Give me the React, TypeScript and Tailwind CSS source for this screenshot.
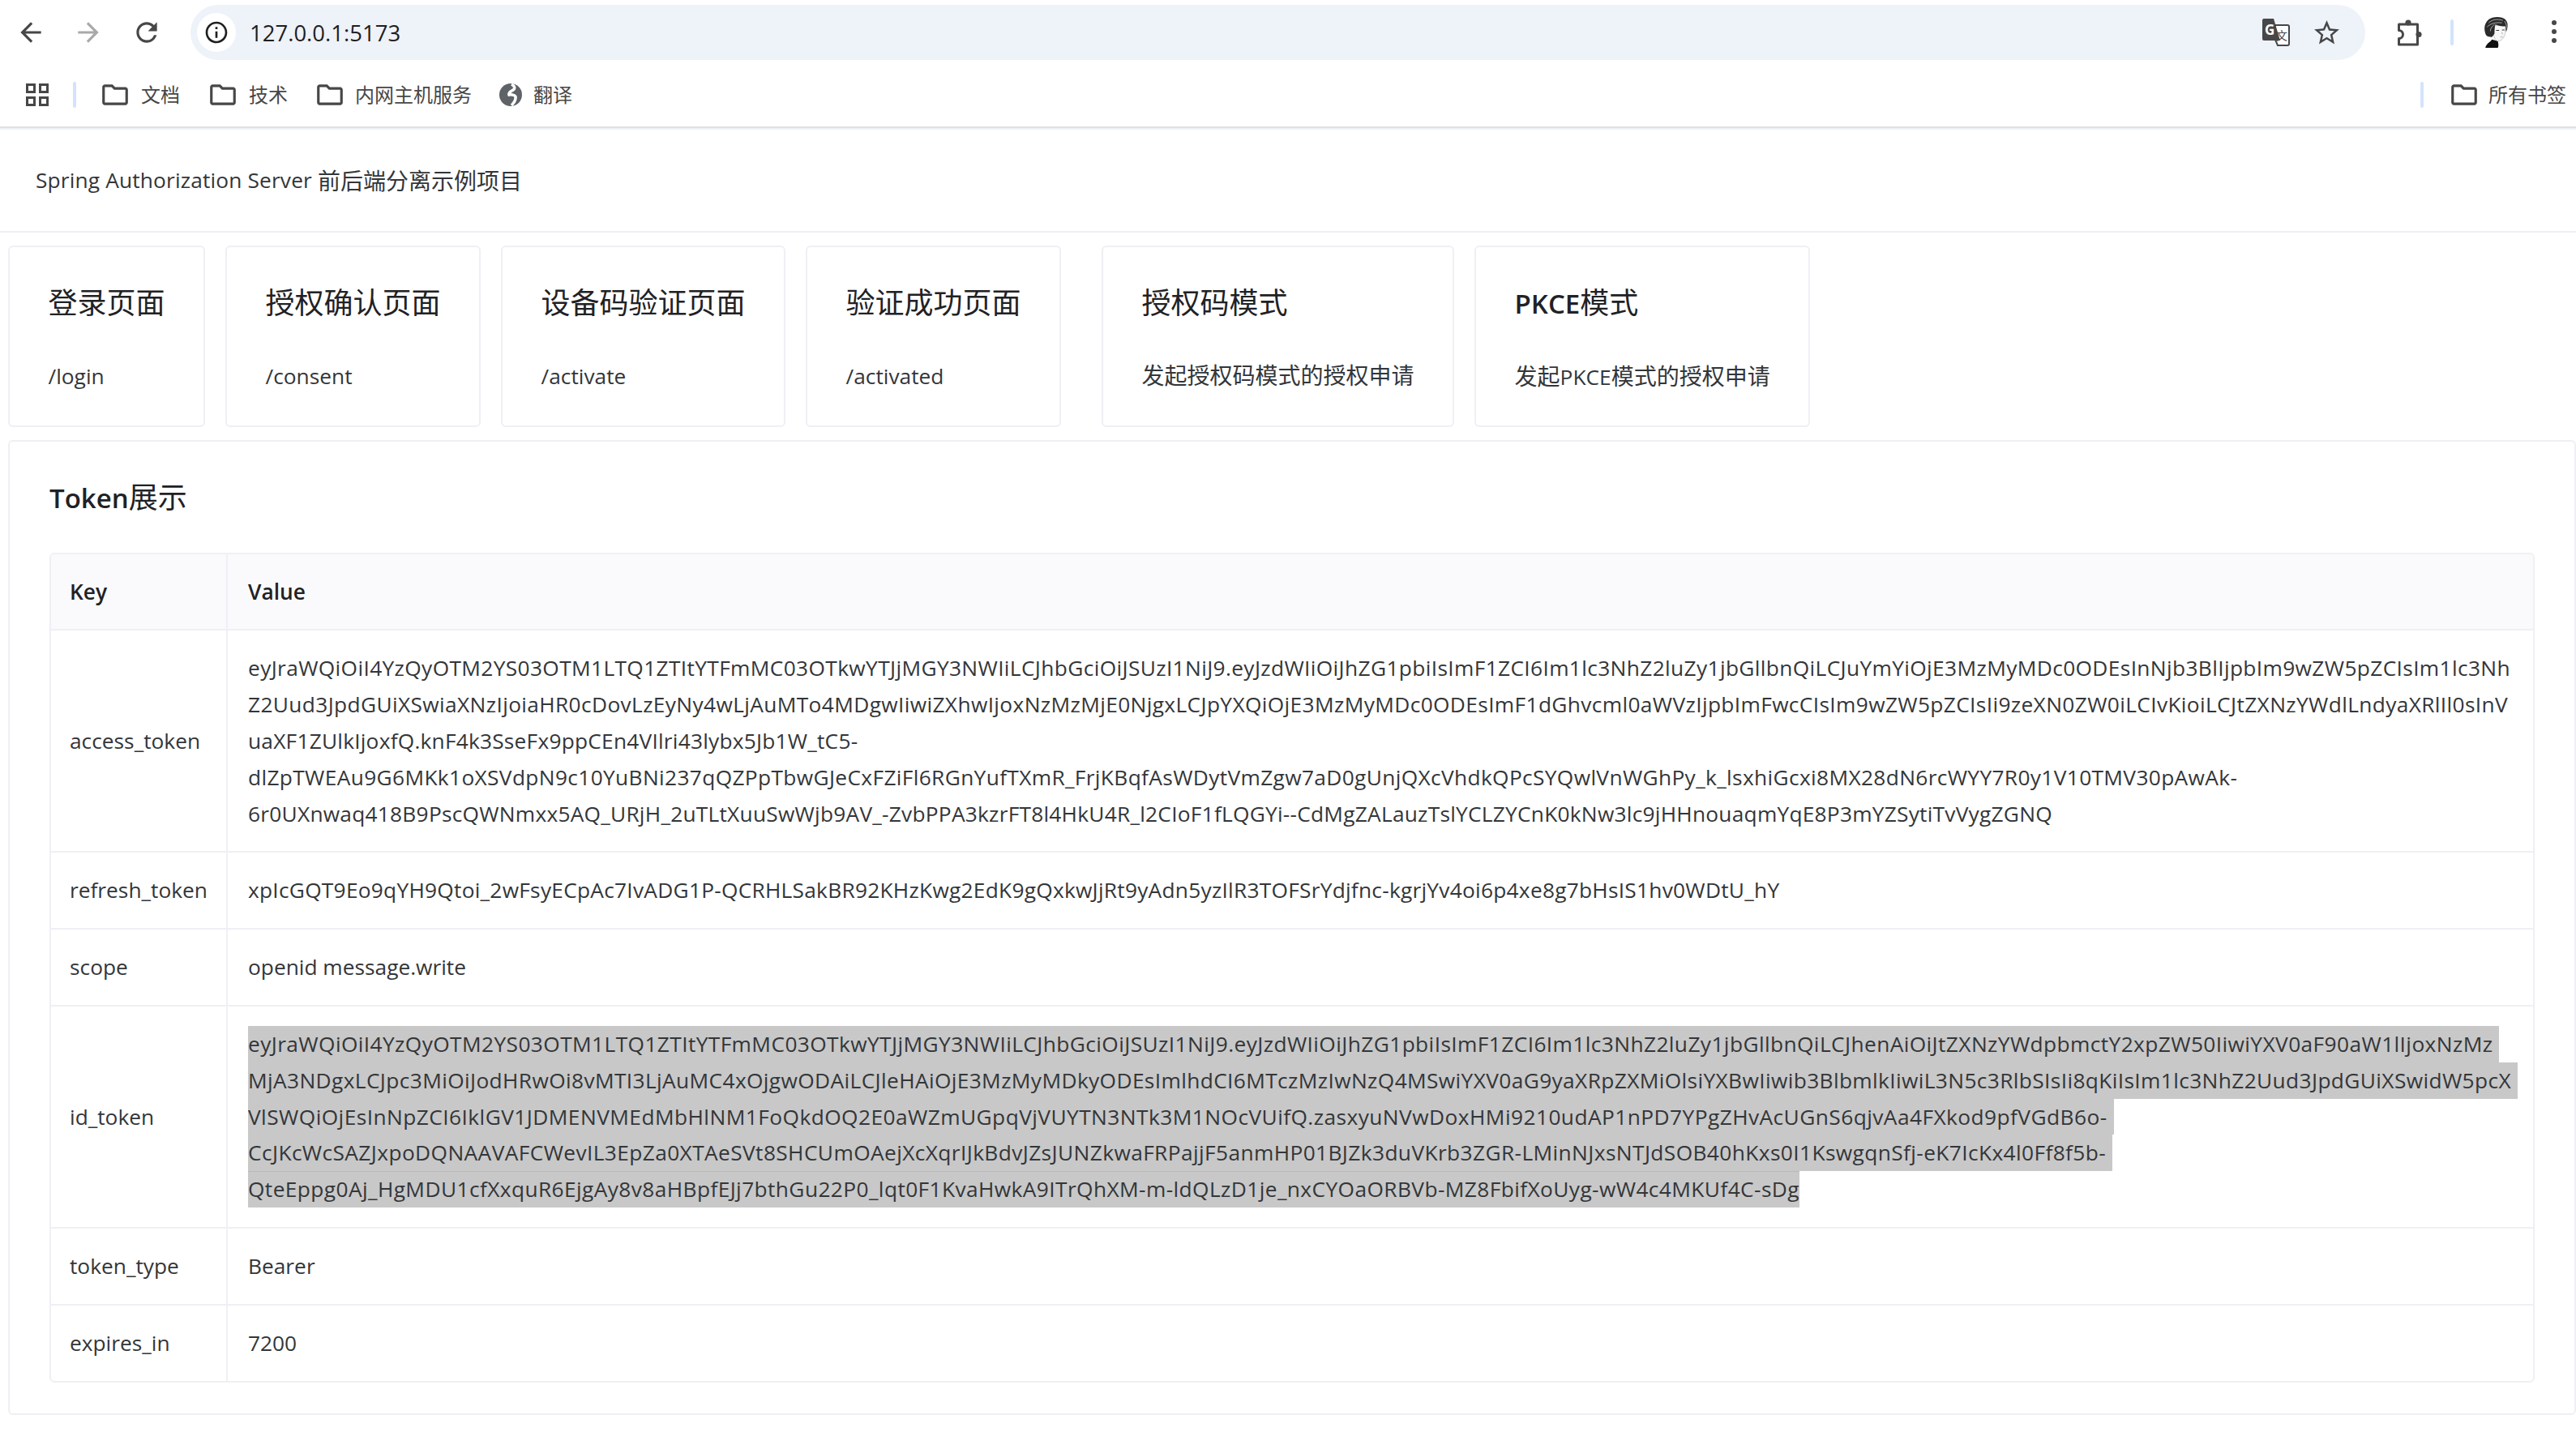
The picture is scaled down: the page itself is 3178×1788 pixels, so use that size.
import React from "react";

const Folder = () => (
  <svg width="38" height="38" viewBox="0 0 24 24" className="shrink-0" fill="#474747">
    <path d="M20 6h-8l-2-2H4c-1.1 0-2 .9-2 2v12c0 1.1.9 2 2 2h16c1.1 0 2-.9 2-2V8c0-1.1-.9-2-2-2zm0 12H4V6h5.17l2 2H20v10z" />
  </svg>
);

const Sep = () => <div className="w-[4px] h-[32px] rounded-full bg-[#d3e3fd] shrink-0" />;

const Avatar = () => (
  <svg width="30" height="38" viewBox="0 0 29 37">
    <path d="M2 37C3 32 8 30 10 27L17 29C18 33 18 35 17 37Z" fill="#111" />
    <path d="M13 10L26 10L26 19C25 25 21 29 17 29C14 28 12 24 12 20Z" fill="#f7f7f7" stroke="#999" strokeWidth="0.5" />
    <path d="M3 22C0 16 0 8 6 3C11 -1 22 -1 26 3C30 7 29 13 27 18L26 11C22 12 17 10 14 9C13 13 13 16 13 20L10 24C7 24 5 24 3 22Z" fill="#2b2b2b" />
    <path d="M6 7C10 3 16 2 23 4M4 12C8 8 14 6 22 7M8 17C8 14 10 11 13 9M25 5C27 8 28 10 27 14" stroke="#d8d8d8" strokeWidth="0.7" fill="none" />
    <path d="M15 16h3.5M22 15.5h3" stroke="#333" strokeWidth="1" />
    <path d="M20 24h3M22 18l.5 3" stroke="#888" strokeWidth="0.6" fill="none" />
  </svg>
);

const accessLines = [
  ["eyJraWQiOiI4YzQyOTM2YS03OTM1LTQ1ZTItYTFmMC03OTkwYTJjMGY3NWIiLCJhbGciOiJSUzI1NiJ9.eyJzdWIiOiJhZG1pbiIsImF1ZCI6Im1lc3NhZ2luZy1jbGllbnQiLCJuYmYiOjE3MzMyMDc0ODEsInNjb3BlIjpbIm9wZW5pZCIsIm1lc3Nh", "tracking-[0.36px]"],
  ["Z2Uud3JpdGUiXSwiaXNzIjoiaHR0cDovLzEyNy4wLjAuMTo4MDgwIiwiZXhwIjoxNzMzMjE0NjgxLCJpYXQiOjE3MzMyMDc0ODEsImF1dGhvcml0aWVzIjpbImFwcCIsIm9wZW5pZCIsIi9zeXN0ZW0iLCIvKioiLCJtZXNzYWdlLndyaXRlIl0sInV", "tracking-[0.36px]"],
  ["uaXF1ZUlkIjoxfQ.knF4k3SseFx9ppCEn4VIlri43lybx5Jb1W_tC5-", "tracking-[0.22px]"],
  ["dlZpTWEAu9G6MKk1oXSVdpN9c10YuBNi237qQZPpTbwGJeCxFZiFl6RGnYufTXmR_FrjKBqfAsWDytVmZgw7aD0gUnjQXcVhdkQPcSYQwlVnWGhPy_k_lsxhiGcxi8MX28dN6rcWYY7R0y1V10TMV30pAwAk-", "tracking-[0.35px]"],
  ["6r0UXnwaq418B9PscQWNmxx5AQ_URjH_2uTLtXuuSwWjb9AV_-ZvbPPA3kzrFT8l4HkU4R_l2CIoF1fLQGYi--CdMgZALauzTslYCLZYCnK0kNw3lc9jHHnouaqmYqE8P3mYZSytiTvVygZGNQ", "tracking-[0.24px]"],
];

const idLines = [
  ["eyJraWQiOiI4YzQyOTM2YS03OTM1LTQ1ZTItYTFmMC03OTkwYTJjMGY3NWIiLCJhbGciOiJSUzI1NiJ9.eyJzdWIiOiJhZG1pbiIsImF1ZCI6Im1lc3NhZ2luZy1jbGllbnQiLCJhenAiOiJtZXNzYWdpbmctY2xpZW50IiwiYXV0aF90aW1lIjoxNzMz", "tracking-[0.40px]"],
  ["MjA3NDgxLCJpc3MiOiJodHRwOi8vMTI3LjAuMC4xOjgwODAiLCJleHAiOjE3MzMyMDkyODEsImlhdCI6MTczMzIwNzQ4MSwiYXV0aG9yaXRpZXMiOlsiYXBwIiwib3BlbmlkIiwiL3N5c3RlbSIsIi8qKiIsIm1lc3NhZ2Uud3JpdGUiXSwidW5pcX", "tracking-[0.37px]"],
  ["VlSWQiOjEsInNpZCI6IklGV1JDMENVMEdMbHlNM1FoQkdOQ2E0aWZmUGpqVjVUYTN3NTk3M1NOcVUifQ.zasxyuNVwDoxHMi9210udAP1nPD7YPgZHvAcUGnS6qjvAa4FXkod9pfVGdB6o-", "tracking-[0.435px]"],
  ["CcJKcWcSAZJxpoDQNAAVAFCWevIL3EpZa0XTAeSVt8SHCUmOAejXcXqrIJkBdvJZsJUNZkwaFRPajjF5anmHP01BJZk3duVKrb3ZGR-LMinNJxsNTJdSOB40hKxs0I1KswgqnSfj-eK7IcKx4l0Ff8f5b-", "tracking-[0.39px]"],
  ["QteEppg0Aj_HgMDU1cfXxquR6EjgAy8v8aHBpfEJj7bthGu22P0_lqt0F1KvaHwkA9ITrQhXM-m-ldQLzD1je_nxCYOaORBVb-MZ8FbifXoUyg-wW4c4MKUf4C-sDg", "tracking-[0.40px]"],
];

const Card = ({ title, desc, className = "" }: { title: React.ReactNode; desc: React.ReactNode; className?: string }) => (
  <div className={`h-[224px] border-2 border-[#efeff5] rounded-[6px] px-[47.5px] pt-[40px] shrink-0 ${className}`}>
    <div className="text-[36px] leading-[57.6px] text-[#1f2225] whitespace-nowrap">{title}</div>
    <div className="mt-[38px] text-[28px] leading-[44.8px] whitespace-nowrap">{desc}</div>
  </div>
);

const Latin = ({ children }: { children: React.ReactNode }) => (
  <span className="text-[26.3px]">{children}</span>
);
const LatinBig = ({ children }: { children: React.ReactNode }) => (
  <span className="text-[33px] font-semibold">{children}</span>
);

const Row = ({ k, last, children }: { k: string; last?: boolean; children: React.ReactNode }) => (
  <tr>
    <td className={`w-[218px] pl-[23px] pr-[10px] py-[24px] border-r-2 border-[#efeff5] whitespace-nowrap ${last ? "" : "border-b-2"}`}>{k}</td>
    <td className={`pl-[25px] pr-[10px] py-[24px] border-[#efeff5] ${last ? "" : "border-b-2"}`}>{children}</td>
  </tr>
);

export default function App() {
  return (
    <div className="w-[3178px] h-[1788px] overflow-hidden bg-white font-['Open_Sans','Noto_Sans_CJK_SC',sans-serif] text-[#333639]">
      {/* Browser toolbar */}
      <div className="h-[80px] flex items-center pl-[3px]">
        <div className="w-[70px] flex justify-center">
          <svg width="38" height="38" viewBox="0 0 24 24" fill="#474747">
            <path d="M20 11H7.83l5.59-5.59L12 4l-8 8 8 8 1.41-1.41L7.83 13H20v-2z" />
          </svg>
        </div>
        <div className="w-[71px] flex justify-center">
          <svg width="38" height="38" viewBox="0 0 24 24" fill="#a9a9a9">
            <path d="M12 4l-1.41 1.41L16.17 11H4v2h12.17l-5.58 5.59L12 20l8-8z" />
          </svg>
        </div>
        <div className="w-[73px] flex justify-center">
          <svg width="38" height="38" viewBox="0 0 24 24" fill="#474747">
            <path d="M17.65 6.35A7.958 7.958 0 0 0 12 4c-4.42 0-7.99 3.58-7.99 8s3.57 8 7.99 8c3.73 0 6.84-2.55 7.73-6h-2.08A5.99 5.99 0 0 1 12 18c-3.31 0-6-2.69-6-6s2.69-6 6-6c1.66 0 3.14.69 4.22 1.78L13 11h7V4l-2.35 2.35z" />
          </svg>
        </div>
        <div className="ml-[18px] w-[2683px] h-[68px] rounded-full bg-[#eef2f9] flex items-center pl-[8px] pr-[29px]">
          <div className="w-[48px] h-[48px] rounded-full bg-white flex items-center justify-center shrink-0">
            <svg width="32" height="32" viewBox="0 0 24 24" fill="#1f1f1f">
              <path d="M11 7h2v2h-2zm0 4h2v6h-2zm1-9C6.48 2 2 6.48 2 12s4.48 10 10 10 10-4.48 10-10S17.52 2 12 2zm0 18c-4.41 0-8-3.59-8-8s3.59-8 8-8 8 3.59 8 8-3.59 8-8 8z" />
            </svg>
          </div>
          <div className="ml-[17px] pt-[1px] text-[27.5px] text-[#1f1f1f]">127.0.0.1:5173</div>
          <div className="ml-auto flex items-center gap-[27px]">
            <svg width="34" height="34" viewBox="0 0 34 34">
              <path d="M16 8h15a2 2 0 0 1 2 2v21a2 2 0 0 1-2 2H19l-3-7z" fill="#fff" stroke="#474747" strokeWidth="2" />
              <path d="M2 0h12l8 27H2a2 2 0 0 1-2-2V2a2 2 0 0 1 2-2z" fill="#474747" />
              <text x="3" y="20" fontSize="17" fontWeight="700" fill="#fff" fontFamily="Open Sans, sans-serif">G</text>
              <text x="17" y="26" fontSize="14" fill="#474747" fontFamily="Noto Sans CJK SC, sans-serif">文</text>
            </svg>
            <svg width="37" height="37" viewBox="0 0 24 24" fill="#474747">
              <path d="M22 9.24l-7.19-.62L12 2 9.19 8.63 2 9.24l5.46 4.73L5.82 21 12 17.27 18.18 21l-1.63-7.03L22 9.24zM12 15.4l-3.76 2.27 1-4.28-3.32-2.88 4.38-.38L12 6.1l1.71 4.04 4.38.38-3.32 2.88 1 4.28L12 15.4z" />
            </svg>
          </div>
        </div>
        <div className="ml-[38px]">
          <svg width="33" height="33" viewBox="0 0 32 33">
            <path d="M3 6h23v25H3v-7.5c3 0 5-2.2 5-5s-2-5-5-5z" fill="#fff" stroke="#474747" strokeWidth="3" strokeLinejoin="round" />
            <circle cx="14.5" cy="4" r="3.6" fill="#474747" />
            <circle cx="27.5" cy="18.5" r="3.6" fill="#474747" />
          </svg>
        </div>
        <div className="ml-[34px]"><Sep /></div>
        <div className="ml-[37px]"><Avatar /></div>
        <div className="ml-[53px]">
          <svg width="8" height="34" viewBox="0 0 8 34" fill="#474747">
            <circle cx="4" cy="5" r="3" />
            <circle cx="4" cy="16" r="3" />
            <circle cx="4" cy="27" r="3" />
          </svg>
        </div>
      </div>

      {/* Bookmarks */}
      <div className="h-[76px] flex items-center text-[24px] text-[#474747] pb-[2px]">
        <svg width="28" height="28" viewBox="0 0 28 28" fill="none" stroke="#474747" strokeWidth="3" className="ml-[32px] shrink-0">
          <rect x="1.5" y="1.5" width="9" height="9" />
          <rect x="17.5" y="1.5" width="9" height="9" />
          <rect x="1.5" y="17.5" width="9" height="9" />
          <rect x="17.5" y="17.5" width="9" height="9" />
        </svg>
        <div className="ml-[30px]"><Sep /></div>
        <div className="ml-[29px]"><Folder /></div>
        <span className="ml-[13px]">文档</span>
        <div className="ml-[34px]"><Folder /></div>
        <span className="ml-[13px]">技术</span>
        <div className="ml-[33px]"><Folder /></div>
        <span className="ml-[12px]">内网主机服务</span>
        <svg width="28" height="28" viewBox="0 0 28 28" className="ml-[34px] shrink-0">
          <circle cx="14" cy="14" r="14" fill="#5f6368" />
          <path d="M15 1C19 3 20 6 17 8C14 10 11 11 12 14C16 13 21 15 20 18C20 22 17 25 15 27" stroke="#fff" strokeWidth="3.5" fill="none" />
        </svg>
        <span className="ml-[14px]">翻译</span>
        <div className="ml-auto"><Sep /></div>
        <div className="ml-[31px]"><Folder /></div>
        <span className="ml-[11px] mr-[12px]">所有书签</span>
      </div>
      <div className="h-[2px] bg-[#dfe1e1]" />
      <div className="h-[2px] bg-[#eef0f6]" />

      {/* Page header */}
      <div className="h-[127px] border-b-2 border-[#efeff5] pl-[44px] flex items-center text-[28px]">
        <span className="text-[26.3px] tracking-[0.15px]">Spring Authorization Server</span>
        <span className="ml-[7px]">前后端分离示例项目</span>
      </div>

      {/* Cards */}
      <div className="mt-[16px] pl-[10px] flex gap-[25px]">
        <Card title="登录页面" desc={<Latin>/login</Latin>} />
        <Card title="授权确认页面" desc={<Latin>/consent</Latin>} />
        <Card title="设备码验证页面" desc={<Latin>/activate</Latin>} />
        <Card title="验证成功页面" desc={<Latin>/activated</Latin>} />
        <Card className="ml-[25px]" title="授权码模式" desc="发起授权码模式的授权申请" />
        <Card title={<><LatinBig>PKCE</LatinBig>模式</>} desc={<>发起<Latin>PKCE</Latin>模式的授权申请</>} />
      </div>

      {/* Token card */}
      <div className="mt-[16px] ml-[10px] h-[1203px] border-2 border-[#efeff5] rounded-[6px] pl-[49px] pr-[49px] pt-[40px]">
        <div className="text-[36px] leading-[57.6px] text-[#1f2225]">
          <LatinBig>Token</LatinBig>展示
        </div>
        <div className="mt-[38px] w-[3066px] border-2 border-[#efeff5] rounded-[6px] overflow-hidden text-[26.3px] leading-[44.8px]">
          <table className="w-full border-separate border-spacing-0">
            <tbody>
              <tr className="bg-[#fafafc] text-[#1f2225] font-semibold">
                <td className="w-[218px] pl-[23px] py-[24px] border-r-2 border-b-2 border-[#efeff5]">Key</td>
                <td className="pl-[25px] py-[24px] border-b-2 border-[#efeff5]">Value</td>
              </tr>
              <Row k="access_token">
                {accessLines.map(([l, t]) => (
                  <div key={l} className={`whitespace-nowrap ${t}`}>{l}</div>
                ))}
              </Row>
              <Row k="refresh_token">
                <div className="whitespace-nowrap tracking-[0.25px]">xpIcGQT9Eo9qYH9Qtoi_2wFsyECpAc7IvADG1P-QCRHLSakBR92KHzKwg2EdK9gQxkwJjRt9yAdn5yzIlR3TOFSrYdjfnc-kgrjYv4oi6p4xe8g7bHsIS1hv0WDtU_hY</div>
              </Row>
              <Row k="scope">openid message.write</Row>
              <Row k="id_token">
                {idLines.map(([l, t], i) => (
                  <div
                    key={l}
                    className={`w-fit whitespace-nowrap bg-[#c8c8c8] ${t} ${i < 4 ? "pr-[8px]" : "shadow-[inset_0_1px_0_#b9b9b9]"}`}
                  >
                    {l}
                  </div>
                ))}
              </Row>
              <Row k="token_type">Bearer</Row>
              <Row k="expires_in" last>7200</Row>
            </tbody>
          </table>
        </div>
      </div>
    </div>
  );
}
